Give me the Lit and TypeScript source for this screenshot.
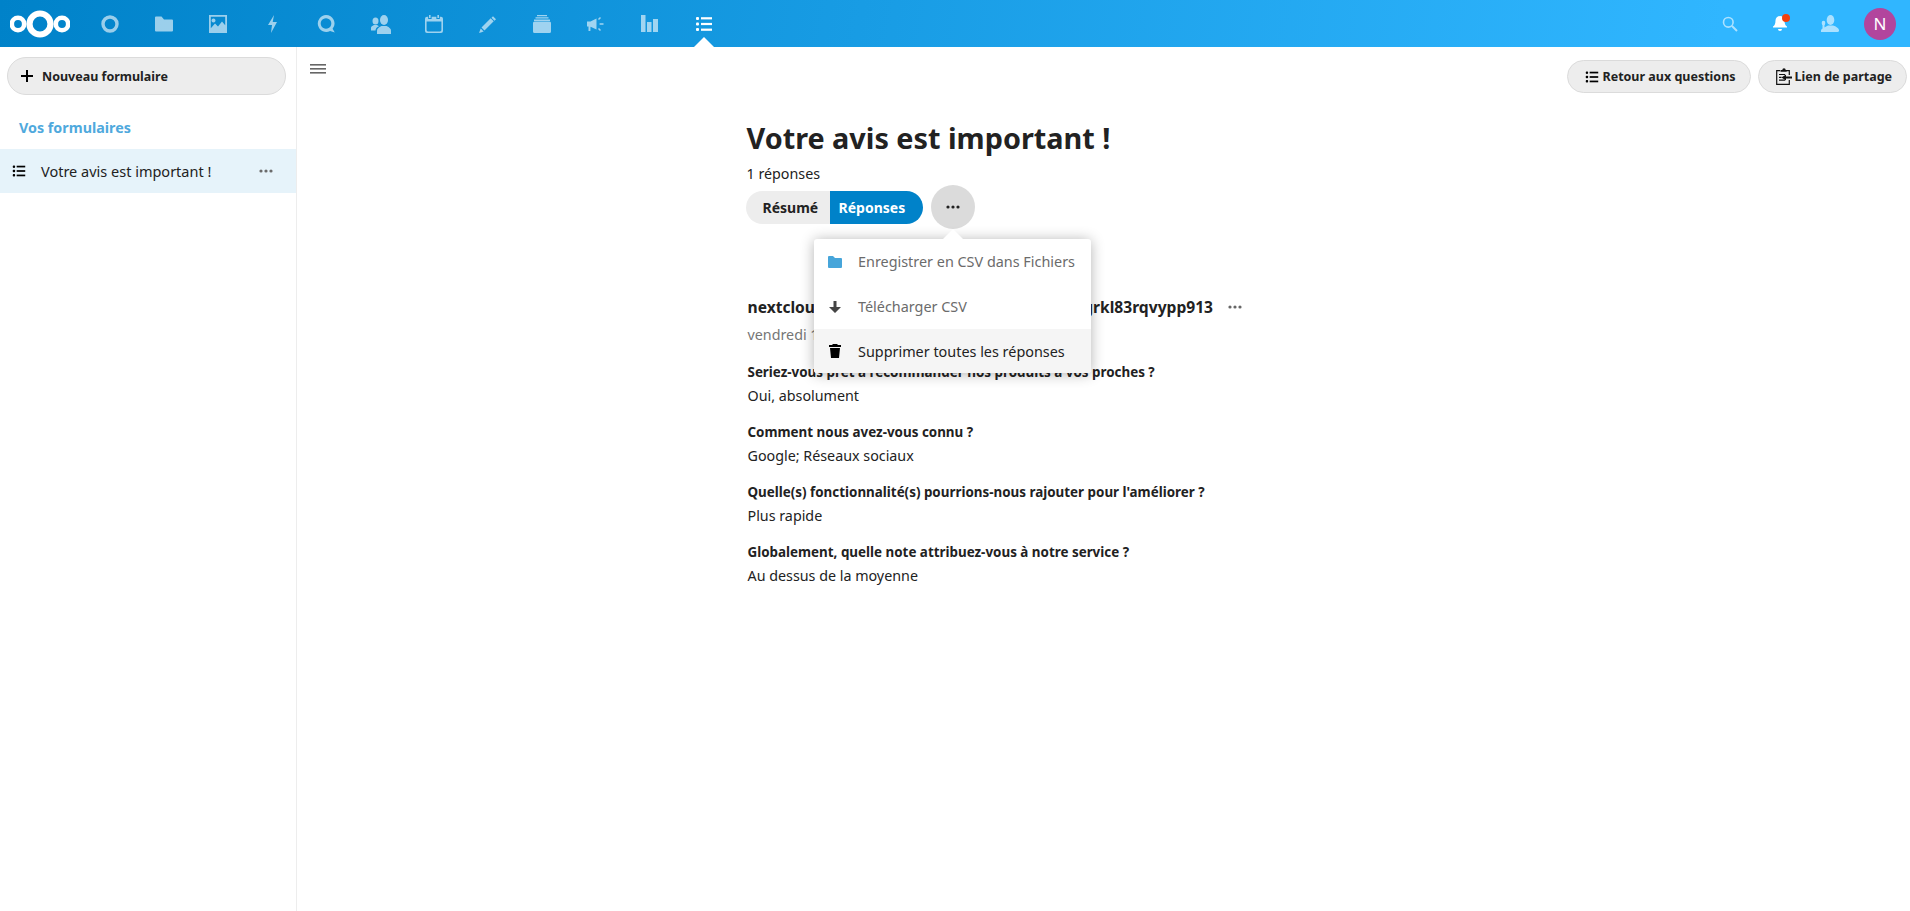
import { LitElement, html, css, svg } from "lit";
import { customElement } from "lit/decorators.js";

const listIcon = svg`<rect x="1" y="2" width="3" height="3" rx="1"/><rect x="6" y="2.2" width="11" height="2.2"/><rect x="1" y="7.5" width="3" height="3" rx="1"/><rect x="6" y="7.9" width="11" height="2.2"/><rect x="1" y="13" width="3" height="3" rx="1"/><rect x="6" y="13.6" width="11" height="2.2"/>`;

const apps = [
  svg`<circle cx="9" cy="9" r="7" fill="none" stroke="#fff" stroke-width="3.4"/>`,
  svg`<path d="M0 2.5q0-1 1-1h5.5l2.5 3h8q1 0 1 1v10q0 1-1 1H1q-1 0-1-1z"/>`,
  svg`<path fill-rule="evenodd" d="M0 0h18v18H0zM1.8 1.8v11.4l4.2-4.6 3 3 4-5 3.2 3.6V1.800zM4.500 3.500a2 2 0 1 1-.01 0z"/>`,
  svg`<path d="M11 0 5 10h4l-1 8 6-11H9.700z"/>`,
  svg`<path fill-rule="evenodd" d="M9 0a8.500 8.500 0 0 1 6.600 13.800l2.200 3.700-4.700-1.400A8.500 8.500 0 1 1 9 0zm0 3.200a5.300 5.300 0 1 0 .01 0z"/>`,
  svg`<g transform="translate(-1 -1)"><ellipse cx="14" cy="6" rx="4" ry="5"/><path d="M7 20v-3.500q0-2.500 4.500-4.500h5q4.500 2 4.500 4.500V20z"/><ellipse cx="5.500" cy="7" rx="3" ry="3.600"/><path d="M1 16.500v-3q0-1.500 3-2.500h3l2 1.200q-3.500 1.300-3.500 4.300z"/></g>`,
  svg`<path fill-rule="evenodd" d="M4 0h1.600v3H4zM12.400 0H14v3h-1.600zM2 1.800h1.200V4h3.400V1.800h4.800V4h3.400V1.800H16q2 0 2 2V16q0 2-2 2H2q-2 0-2-2V3.800q0-2 2-2zM1.600 6.500V15q0 1.400 1.400 1.400h12q1.400 0 1.400-1.400V6.500z"/>`,
  svg`<path d="M14 1.200l3 3-1.500 1.500-3-3zM11.700 3.300l3 3-9.200 9.200-3-3zM1.700 13.400l3 3L0 18z"/>`,
  svg`<path d="M4 0h10v1.300H4zM2.500 2.300h13v1.300h-13zM1 4.600h16v1.300H1zM1.500 6.600h15q1.500 0 1.500 1.500V16.500q0 1.500-1.500 1.500h-15Q0 18 0 16.500V8.100q0-1.500 1.500-1.500z"/>`,
  svg`<path d="M0 6.500h3.500L9.500 3.500v11l-6-2.700-.1 4.200H1.500v-4.500H0z"/><path d="M11.500 4.500l2-2M12.600 9h3.900M11.500 13.500l2 2" fill="none" stroke="#fff" stroke-width="1.500"/>`,
  svg`<rect x="0" y="0" width="4.500" height="17"/><rect x="6" y="7" width="4.500" height="10"/><rect x="12" y="4" width="5" height="13"/>`,
  listIcon,
];

const dots = html`<svg class="dots" viewBox="0 0 14 4" width="14" height="4"><circle cx="2" cy="2" r="1.600"/><circle cx="7" cy="2" r="1.600"/><circle cx="12" cy="2" r="1.600"/></svg>`;

const answers = [
  ["Seriez-vous prêt à recommander nos produits à vos proches ?", "Oui, absolument"],
  ["Comment nous avez-vous connu ?", "Google; Réseaux sociaux"],
  ["Quelle(s) fonctionnalité(s) pourrions-nous rajouter pour l'améliorer ?", "Plus rapide"],
  ["Globalement, quelle note attribuez-vous à notre service ?", "Au dessus de la moyenne"],
];

@customElement("app-root")
export class AppRoot extends LitElement {
  static styles = css`
    :host { display: block; height: 911px; overflow: hidden; background: #fff; color: #222; font-family: "Noto Sans", sans-serif; font-size: 14.300px; }
    * { box-sizing: border-box; }
    svg { display: block; flex: none; }
    .header { height: 47px; display: flex; align-items: center; background: linear-gradient(100deg, #0082c9 0%, #30b6ff 90%); }
    .logo { margin-left: 10px; margin-right: 13px; }
    .apps { display: flex; }
    .app { width: 54px; height: 47px; display: flex; align-items: center; justify-content: center; position: relative; opacity: .6; fill: #fff; }
    .app.active { opacity: 1; }
    .app.active::after { content: ""; position: absolute; left: 17px; bottom: 0; border: 10px solid transparent; border-top: 0; border-bottom-color: #fff; }
    .right { margin-left: auto; display: flex; align-items: center; padding-right: 14px; fill: #fff; }
    .ri { width: 50px; display: flex; justify-content: center; position: relative; }
    .dim { opacity: .6; }
    .bell { margin-top: -2px; }
    .badge { position: absolute; top: -3px; left: 27px; width: 8px; height: 8px; border-radius: 50%; background: #f4400c; }
    .avatar { width: 32px; height: 32px; border-radius: 50%; background: #b2459d; color: #fff; display: flex; align-items: center; justify-content: center; font-size: 17px; margin-left: 9px; }
    .body { display: flex; height: 864px; }
    .side { width: 297px; border-right: 1px solid #ededed; flex: none; padding-top: 10px; }
    .new { margin: 0 10px 0 7px; height: 38px; border-radius: 19px; background: #ededed; border: 1px solid #dbdbdb; display: flex; align-items: center; padding-left: 12px; gap: 8px; font-weight: 700; font-size: 12.500px; }
    .cap { margin: 17px 0 0 19px; height: 32px; line-height: 32px; color: #4fa9dd; font-weight: 700; font-size: 14.300px; }
    .row { margin-top: 5px; height: 44px; background: #e6f3fa; display: flex; align-items: center; padding-left: 12px; font-size: 14.500px; }
    .row .t { margin-left: 15px; flex: 1; }
    .row .dots { margin-right: 23px; fill: #6b6b6b; }
    .main { flex: 1; min-width: 0; }
    .top { display: flex; align-items: center; padding: 13px 3px 0 0; height: 46px; }
    .burger { margin-left: 13px; margin-right: auto; margin-top: -15px; fill: #666; }
    .pill { height: 33px; border-radius: 17px; background: #ededed; border: 1px solid #dbdbdb; display: flex; align-items: center; font-weight: 700; font-size: 12.500px; padding: 0 14px 0 17px; gap: 3px; margin-left: 7px; }
    .col { width: 800px; margin: 0 auto; padding-left: 43px; }
    h2 { margin: 25px 0 0; font-size: 28.800px; font-weight: 700; line-height: 40px; height: 40px; }
    .count { margin: 4px 0 0; line-height: 24px; height: 24px; }
    .tabs { display: flex; align-items: center; height: 44px; margin: -1px 0 0 -1px; }
    .seg { display: flex; height: 33px; border-radius: 17px; overflow: hidden; font-weight: 700; font-size: 14px; line-height: 33px; }
    .seg span { background: #ededed; width: 84px; padding-left: 17px; }
    .seg span.on { width: 93px; padding-left: 9px; background: #0082c9; color: #fff; }
    .more { position: relative; margin-left: 8px; width: 44px; height: 44px; border-radius: 50%; background: #dbdbdb; display: flex; align-items: center; justify-content: center; fill: #222; }
    .menu { position: absolute; top: 54px; left: -117px; width: 277px; height: 134px; background: #fff; border-radius: 3px; box-shadow: 0 1px 14px rgba(0,0,0,.3); color: #6b6b6b; z-index: 2; }
    .menu::before { content: ""; position: absolute; top: -10px; left: 129px; border: 10px solid transparent; border-top: 0; border-bottom-color: #fff; }
    .item { height: 45px; display: flex; align-items: center; font-size: 14.400px; }
    .item .ic { width: 44.500px; padding-left: 14px; flex: none; }
    .item.hover { background: #f5f5f5; color: #222; height: 44px; border-radius: 0 0 3px 3px; }
    .resp { margin-top: 66px; padding-left: 1px; }
    .name { display: flex; align-items: center; height: 24px; font-weight: 700; font-size: 15.600px; }
    .name .dots { margin-left: 15px; fill: #666; }
    .date { margin-top: 4px; height: 24px; line-height: 24px; color: #767676; }
    .qa { margin-top: 12px; }
    .q { font-weight: 700; font-size: 13.400px; line-height: 24px; height: 24px; }
    .a { line-height: 24px; height: 24px; }
    .date + .qa { margin-top: 13px; }
  `;

  render() {
    return html`
      <div class="header">
        <svg class="logo" width="60" height="30" viewBox="0 0 60 30" fill="none" stroke="#fff">
          <circle cx="30" cy="15" r="10.500" stroke-width="6.200"/>
          <circle cx="8" cy="15" r="6.200" stroke-width="4.600"/>
          <circle cx="52" cy="15" r="6.200" stroke-width="4.600"/>
        </svg>
        <div class="apps">
          ${apps.map((a, i) => html`<div class="app ${i === apps.length - 1 ? "active" : ""}"><svg width="18" height="18" viewBox="0 0 18 18" overflow="visible">${a}</svg></div>`)}
        </div>
        <div class="right">
          <div class="ri dim"><svg width="16" height="16" viewBox="0 0 16 16" fill="none" stroke="#fff" stroke-width="1.600"><circle cx="6.300" cy="6.300" r="4.800"/><path d="M10 10l5 5" stroke-width="2"/></svg></div>
          <div class="ri"><svg class="bell" width="14" height="16" viewBox="0 0 14 16"><path d="M7 1a4.500 4.500 0 0 1 4.500 4.500c0 3.500 1 5 2.500 6v1H0v-1c1.500-1 2.500-2.500 2.500-6A4.500 4.500 0 0 1 7 1zM5 14h4a2 2 0 0 1-4 0z"/></svg><span class="badge"></span></div>
          <div class="ri dim"><svg width="18" height="18" viewBox="0 0 18 18"><ellipse cx="9.500" cy="5" rx="3.800" ry="5"/><path d="M0 17q-.5-2.500 2-4 2-1 5-2.500h5q5 1.500 6 4.500 .2 2-1.500 2z"/><ellipse cx="2.500" cy="8" rx="1.800" ry="2.300"/><rect x="1.500" y="9" width="2" height="4"/></svg></div>
          <div class="avatar">N</div>
        </div>
      </div>
      <div class="body">
        <div class="side">
          <div class="new"><svg width="14" height="14" viewBox="0 0 14 14"><path d="M6 1h2v5h5v2H8v5H6V8H1V6h5z"/></svg>Nouveau formulaire</div>
          <div class="cap">Vos formulaires</div>
          <div class="row"><svg width="14" height="14" viewBox="0 0 18 18">${listIcon}</svg><span class="t">Votre avis est important !</span>${dots}</div>
        </div>
        <div class="main">
          <div class="top">
            <svg class="burger" width="16" height="10" viewBox="0 0 16 10"><rect width="16" height="1.600"/><rect y="4" width="16" height="1.600"/><rect y="8" width="16" height="1.600"/></svg>
            <div class="pill"><svg width="14" height="14" viewBox="0 0 18 18">${listIcon}</svg>Retour aux questions</div>
            <div class="pill"><svg width="16" height="17" viewBox="0 0 16 17" fill="none" stroke="#111" stroke-width="1.200"><path d="M4 2.600H.7v13.700h12.600V12M13.300 7V2.600H10"/><path d="M4.500 3.800V1.900h1.800a1.700 1.700 0 0 1 3.400 0h.9v1.900z" fill="#111" stroke="none"/><path d="M3 6.500h6M3 9.300h2.500M3 12.200h6"/><path d="M9 9.500h7" stroke-width="2"/><path d="M10 6.500v6L5.500 9.500z" fill="#111" stroke="none"/></svg>Lien de partage</div>
          </div>
          <div class="col">
            <h2>Votre avis est important !</h2>
            <div class="count">1 réponses</div>
            <div class="tabs">
              <div class="seg"><span>Résumé</span><span class="on">Réponses</span></div>
              <div class="more">${dots}
                <div class="menu">
                  <div class="item"><span class="ic"><svg width="14" height="12" viewBox="0 0 14 12" fill="#46a5da"><path d="M0 1q0-1 1-1h4l2 2h6q1 0 1 1v8q0 1-1 1H1q-1 0-1-1z"/></svg></span>Enregistrer en CSV dans Fichiers</div>
                  <div class="item"><span class="ic"><svg width="14" height="14" viewBox="0 0 14 14" fill="#444"><path d="M5.500 1h3v6H13l-6 6-6-6h4.500z"/></svg></span>Télécharger CSV</div>
                  <div class="item hover"><span class="ic"><svg width="14" height="14" viewBox="0 0 14 14" fill="#000"><path d="M5 0h4l1 1h3v2H1V1h3zM2 4h10l-1 10H3z"/></svg></span>Supprimer toutes les réponses</div>
                </div>
              </div>
            </div>
            <div class="resp">
              <div class="name">nextcloud-anon-user-response-k7v2m9x4t1grkl83rqvypp913${dots}</div>
              <div class="date">vendredi 12 mars 2021 à 14:32</div>
              ${answers.map(([q, a]) => html`<div class="qa"><div class="q">${q}</div><div class="a">${a}</div></div>`)}
            </div>
          </div>
        </div>
      </div>
    `;
  }
}
